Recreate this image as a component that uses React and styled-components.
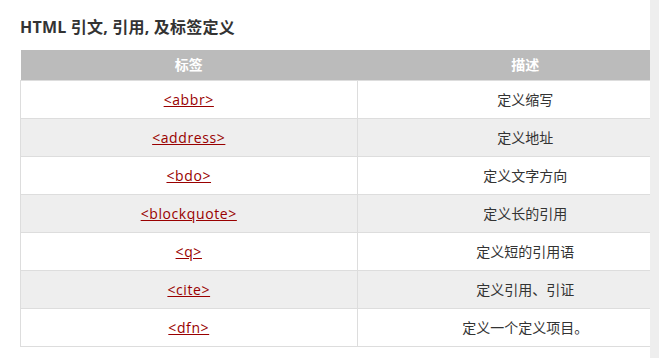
import React from "react";
import styled, { createGlobalStyle } from "styled-components";

const GlobalStyle = createGlobalStyle`
  html, body {
    margin: 0;
    padding: 0;
    background: #fff;
    font-family: "Open Sans", "Noto Sans CJK SC", sans-serif;
    overflow: hidden;
  }
`;

const Page = styled.div`
  display: flex;
  width: 659px;
  height: 358px;
`;

const Content = styled.div`
  flex: 1;
  overflow: hidden;
  padding-left: 20px;
`;

const ScrollTrack = styled.div`
  width: 9px;
  flex-shrink: 0;
  background: #eeeeee;
`;

const Title = styled.h2`
  margin: 16px 0 12px;
  font-size: 16px;
  line-height: 22px;
  font-weight: 700;
  color: #333;
  white-space: nowrap;
  letter-spacing: 0.2px;
`;

const Table = styled.table`
  width: 674px;
  table-layout: fixed;
  border-collapse: collapse;
  font-size: 14px;
`;

const HeadCell = styled.th`
  height: 30px;
  padding: 0;
  background: #bbbbbb;
  color: #fff;
  font-weight: 700;
  text-align: center;
  line-height: 30px;
`;

const Row = styled.tr`
  background: ${({ $alt }) => ($alt ? "#eeeeee" : "#ffffff")};
`;

const Cell = styled.td`
  height: 37px;
  padding: 0;
  border: 1px solid #dddddd;
  text-align: center;
  color: #333;
  line-height: 20px;
`;

const TagLink = styled.a`
  color: #990000;
  text-decoration: underline;
  letter-spacing: 0.6px;
`;

const rows = [
  ["<abbr>", "定义缩写"],
  ["<address>", "定义地址"],
  ["<bdo>", "定义文字方向"],
  ["<blockquote>", "定义长的引用"],
  ["<q>", "定义短的引用语"],
  ["<cite>", "定义引用、引证"],
  ["<dfn>", "定义一个定义项目。"],
];

export default function App() {
  return (
    <>
      <GlobalStyle />
      <Page>
        <Content>
          <Title>HTML 引文, 引用, 及标签定义</Title>
          <Table>
            <thead>
              <tr>
                <HeadCell>标签</HeadCell>
                <HeadCell>描述</HeadCell>
              </tr>
            </thead>
            <tbody>
              {rows.map(([tag, desc], i) => (
                <Row key={tag} $alt={i % 2 === 1}>
                  <Cell>
                    <TagLink href="#">{tag}</TagLink>
                  </Cell>
                  <Cell>{desc}</Cell>
                </Row>
              ))}
            </tbody>
          </Table>
        </Content>
        <ScrollTrack />
      </Page>
    </>
  );
}
